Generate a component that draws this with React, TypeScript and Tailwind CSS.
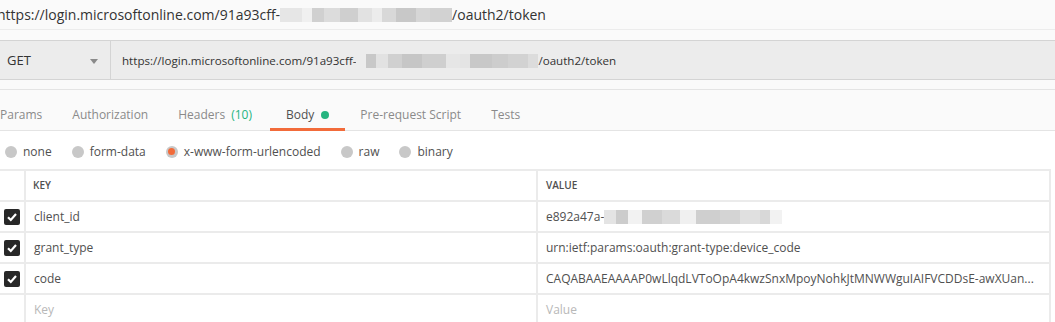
import React from "react";

const font = { fontFamily: '"Open Sans", "Noto Sans", sans-serif' };

function Blur({ widths }: { widths: { w: number; c: string }[] }) {
  return (
    <span className="inline-flex h-[14px] items-stretch align-middle">
      {widths.map((b, i) => (
        <span key={i} style={{ width: b.w, backgroundColor: b.c }} />
      ))}
    </span>
  );
}

const topBlur = [
  { w: 22, c: "#e6e6e6" },
  { w: 10, c: "#f0f0f0" },
  { w: 12, c: "#d0d0d0" },
  { w: 16, c: "#dcdcdc" },
  { w: 18, c: "#cfcfcf" },
  { w: 14, c: "#e2e2e2" },
  { w: 10, c: "#ececec" },
  { w: 14, c: "#d8d8d8" },
  { w: 20, c: "#c8c8c8" },
  { w: 14, c: "#d6d6d6" },
  { w: 22, c: "#d2d2d2" },
];

const barBlur = [
  { w: 10, c: "#ececec" },
  { w: 10, c: "#c8c8c8" },
  { w: 12, c: "#e2e2e2" },
  { w: 14, c: "#d0d0d0" },
  { w: 20, c: "#c6c6c6" },
  { w: 24, c: "#cfcfcf" },
  { w: 14, c: "#e6e6e6" },
  { w: 10, c: "#e4e4e4" },
  { w: 22, c: "#c8c8c8" },
  { w: 16, c: "#cdcdcd" },
  { w: 20, c: "#d2d2d2" },
  { w: 10, c: "#dcdcdc" },
];

const valBlur = [
  { w: 12, c: "#e4e4e4" },
  { w: 12, c: "#cccccc" },
  { w: 14, c: "#f2f2f2" },
  { w: 20, c: "#d0d0d0" },
  { w: 18, c: "#dadada" },
  { w: 16, c: "#f0f0f0" },
  { w: 24, c: "#cfcfcf" },
  { w: 20, c: "#d4d4d4" },
  { w: 20, c: "#e0e0e0" },
  { w: 10, c: "#d8d8d8" },
  { w: 12, c: "#f2f2f2" },
];

function Check() {
  return (
    <span className="flex h-[16px] w-[16px] items-center justify-center rounded-[2px] bg-[#282828]">
      <svg width="12" height="12" viewBox="0 0 12 12">
        <path d="M2 6.2 L4.8 9 L10 3" fill="none" stroke="#fff" strokeWidth="2.2" />
      </svg>
    </span>
  );
}

const rows = [
  { key: "client_id", value: "e892a47a-", blur: true },
  { key: "grant_type", value: "urn:ietf:params:oauth:grant-type:device_code" },
  {
    key: "code",
    value:
      "CAQABAAEAAAAP0wLlqdLVToOpA4kwzSnxMpoyNohkJtMNWWguIAIFVCDDsE-awXUan...",
  },
];

export default function App() {
  return (
    <div className="h-[322px] w-[1055px] overflow-hidden bg-white text-[#505050]" style={font}>
      <div className="bg-[#fafafa]">
        <div className="flex h-[30px] items-center border-b border-[#ececec] text-[14px] text-[#333]">
          <span className="ml-[-3px]">https://login.microsoftonline.com/91a93cff-</span>
          <Blur widths={topBlur} />
          <span>/oauth2/token</span>
        </div>
        <div className="h-[10px]" />
        <div className="flex h-[40px] items-stretch border-y border-[#d4d4d4] bg-[#ececec]">
          <div className="flex w-[111px] items-center justify-between border-r border-[#d4d4d4] pl-[7px] pr-[12px] pt-[2px] text-[13px] text-[#333]">
            <span>GET</span>
            <svg width="8" height="5" viewBox="0 0 8 5">
              <path d="M0 0 H8 L4 5 Z" fill="#8a8a8a" />
            </svg>
          </div>
          <div className="flex items-center pl-[11px] pt-[2px] text-[11.6px] text-[#333]">
            <span>https://login.microsoftonline.com/91a93cff-</span>
            <Blur widths={barBlur} />
            <span>/oauth2/token</span>
          </div>
        </div>
        <div className="h-[10px] border-b border-[#e4e4e4]" />
        <div className="flex h-[41px] items-stretch border-b border-[#e4e4e4] pt-[10px] text-[12px] text-[#8a8a8a]">
          <div className="ml-[-15px] flex">
            <div className="flex items-center px-[15px]">Params</div>
            <div className="flex items-center px-[15px]">Authorization</div>
            <div className="flex items-center px-[15px]">
              Headers <span className="ml-[6px] text-[#26b47f]">(10)</span>
            </div>
            <div className="relative ml-[3px] flex items-center px-[16px] text-[#505050]">
              Body
              <span className="ml-[7px] h-[8px] w-[8px] rounded-full bg-[#26b47f]" />
              <span className="absolute bottom-[-1px] left-0 right-0 h-[3px] bg-[#f26b3a]" />
            </div>
            <div className="flex items-center px-[15px]">Pre-request Script</div>
            <div className="flex items-center px-[15px]">Tests</div>
          </div>
        </div>
      </div>

      <div className="flex h-[38px] items-center gap-[20px] pl-[5px] pt-[3px] text-[12px] text-[#505050]">
        {["none", "form-data", "x-www-form-urlencoded", "raw", "binary"].map((t) => (
          <div key={t} className="flex items-center gap-[6px]">
            <span className="flex h-[12px] w-[12px] items-center justify-center rounded-full bg-[#c8c8c8]">
              {t === "x-www-form-urlencoded" && (
                <span className="h-[7px] w-[7px] rounded-full bg-[#f26b3a]" />
              )}
            </span>
            <span>{t}</span>
          </div>
        ))}
      </div>

      <div className="w-[1051px] border-t-2 border-[#ebebeb] text-[12px]">
        <div className="flex h-[31px] border-b-2 border-[#ebebeb]">
          <div className="w-[26px] border-r-2 border-[#ebebeb]" />
          <div className="flex w-[512px] items-center border-r-2 border-[#ebebeb] pl-[7px] text-[10px] font-semibold text-[#505050]">
            KEY
          </div>
          <div className="flex flex-1 items-center border-r-2 border-[#ebebeb] pl-[8px] text-[10px] font-semibold text-[#505050]">
            VALUE
          </div>
        </div>
        {rows.map((r) => (
          <div key={r.key} className="flex h-[31px] border-b-2 border-[#ebebeb]">
            <div className="flex w-[26px] items-center justify-center border-r-2 border-[#ebebeb]">
              <Check />
            </div>
            <div className="flex w-[512px] items-center border-r-2 border-[#ebebeb] pl-[8px] text-[#505050]">
              {r.key}
            </div>
            <div className="flex min-w-0 flex-1 items-center overflow-hidden whitespace-nowrap border-r-2 border-[#ebebeb] pl-[8px] text-[#505050]">
              <span>{r.value}</span>
              {r.blur && <Blur widths={valBlur} />}
            </div>
          </div>
        ))}
        <div className="flex h-[31px] border-b-2 border-[#ebebeb]">
          <div className="w-[26px] border-r-2 border-[#ebebeb]" />
          <div className="flex w-[512px] items-center border-r-2 border-[#ebebeb] pl-[8px] text-[#b8b8b8]">
            Key
          </div>
          <div className="flex flex-1 items-center border-r-2 border-[#ebebeb] pl-[8px] text-[#b8b8b8]">
            Value
          </div>
        </div>
      </div>
    </div>
  );
}
